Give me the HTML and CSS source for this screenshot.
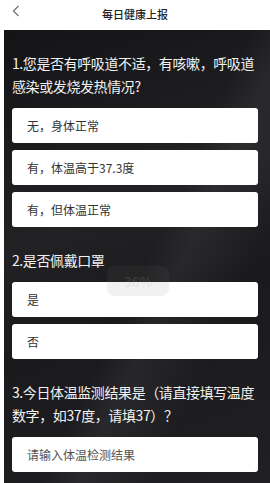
FILE: index.html
```html
<!DOCTYPE html>
<html lang="zh-CN">
<head>
<meta charset="utf-8">
<title>每日健康上报</title>
<link rel="stylesheet" href="styles.css">
</head>
<body>
<header class="topbar">
  <svg class="back" width="8" height="12" viewBox="0 0 8 12"><path d="M6.5 1 L1.5 6 L6.5 11" fill="none" stroke="#777" stroke-width="1.3"/></svg>
  <h1 class="title">每日健康上报</h1>
</header>
<main class="panel">
  <section class="block">
    <p class="question">1.您是否有呼吸道不适，有咳嗽，呼吸道感染或发烧发热情况?</p>
    <div class="options">
      <div class="card">无，身体正常</div>
      <div class="card">有，体温高于37.3度</div>
      <div class="card">有，但体温正常</div>
    </div>
  </section>
  <section class="block">
    <p class="question">2.是否佩戴口罩</p>
    <div class="options">
      <div class="card">是</div>
      <div class="card">否</div>
    </div>
  </section>
  <section class="block">
    <p class="question">3.今日体温监测结果是（请直接填写温度数字，如37度，请填37）？</p>
    <div class="options">
      <div class="card placeholder">请输入体温检测结果</div>
    </div>
  </section>
  <div class="toast">36%</div>
</main>
</body>
</html>
```
FILE: styles.css
```css
html, body {
  margin: 0;
  padding: 0;
  background: #ffffff;
  font-family: "Noto Sans CJK SC", "Noto Sans", sans-serif;
  height: 483px;
  overflow: hidden;
}
.topbar {
  height: 30px;
  background: #ffffff;
  display: flex;
  align-items: center;
  justify-content: center;
  position: relative;
}
.back {
  position: absolute;
  left: 12px;
  top: 5px;
}
.title {
  margin: 0;
  font-size: 11px;
  font-weight: 500;
  color: #222;
  line-height: 30px;
  margin-top: -3px;
}
.panel {
  position: relative;
  margin-left: 4px;
  height: 453px;
  box-sizing: border-box;
  padding: 22px 12px 0 8px;
  display: flex;
  flex-direction: column;
  gap: 22px;
  background:
    linear-gradient(115deg, rgba(0,0,0,0) 52%, rgba(255,255,255,0.05) 60%, rgba(0,0,0,0) 75%),
    linear-gradient(160deg, #141416 0%, #222225 40%, #1a1a1c 60%, #202022 100%);
}
.block {
  display: flex;
  flex-direction: column;
}
.question {
  margin: 0;
  color: #f2f2f2;
  font-size: 14px;
  line-height: 23px;
  letter-spacing: -0.4px;
}
.options {
  margin-top: 10px;
  display: flex;
  flex-direction: column;
  gap: 7px;
}
.card {
  height: 35px;
  background: #ffffff;
  border-radius: 3px;
  padding-left: 15px;
  display: flex;
  align-items: center;
  font-size: 12px;
  color: #333;
}
.placeholder {
  color: #555;
}
.toast {
  position: absolute;
  left: 103px;
  top: 236px;
  width: 62px;
  height: 30px;
  border-radius: 8px;
  background: rgba(120,120,120,0.1);
  color: rgba(170,170,170,0.18);
  font-size: 13px;
  font-weight: bold;
  display: flex;
  align-items: center;
  justify-content: center;
}
```
